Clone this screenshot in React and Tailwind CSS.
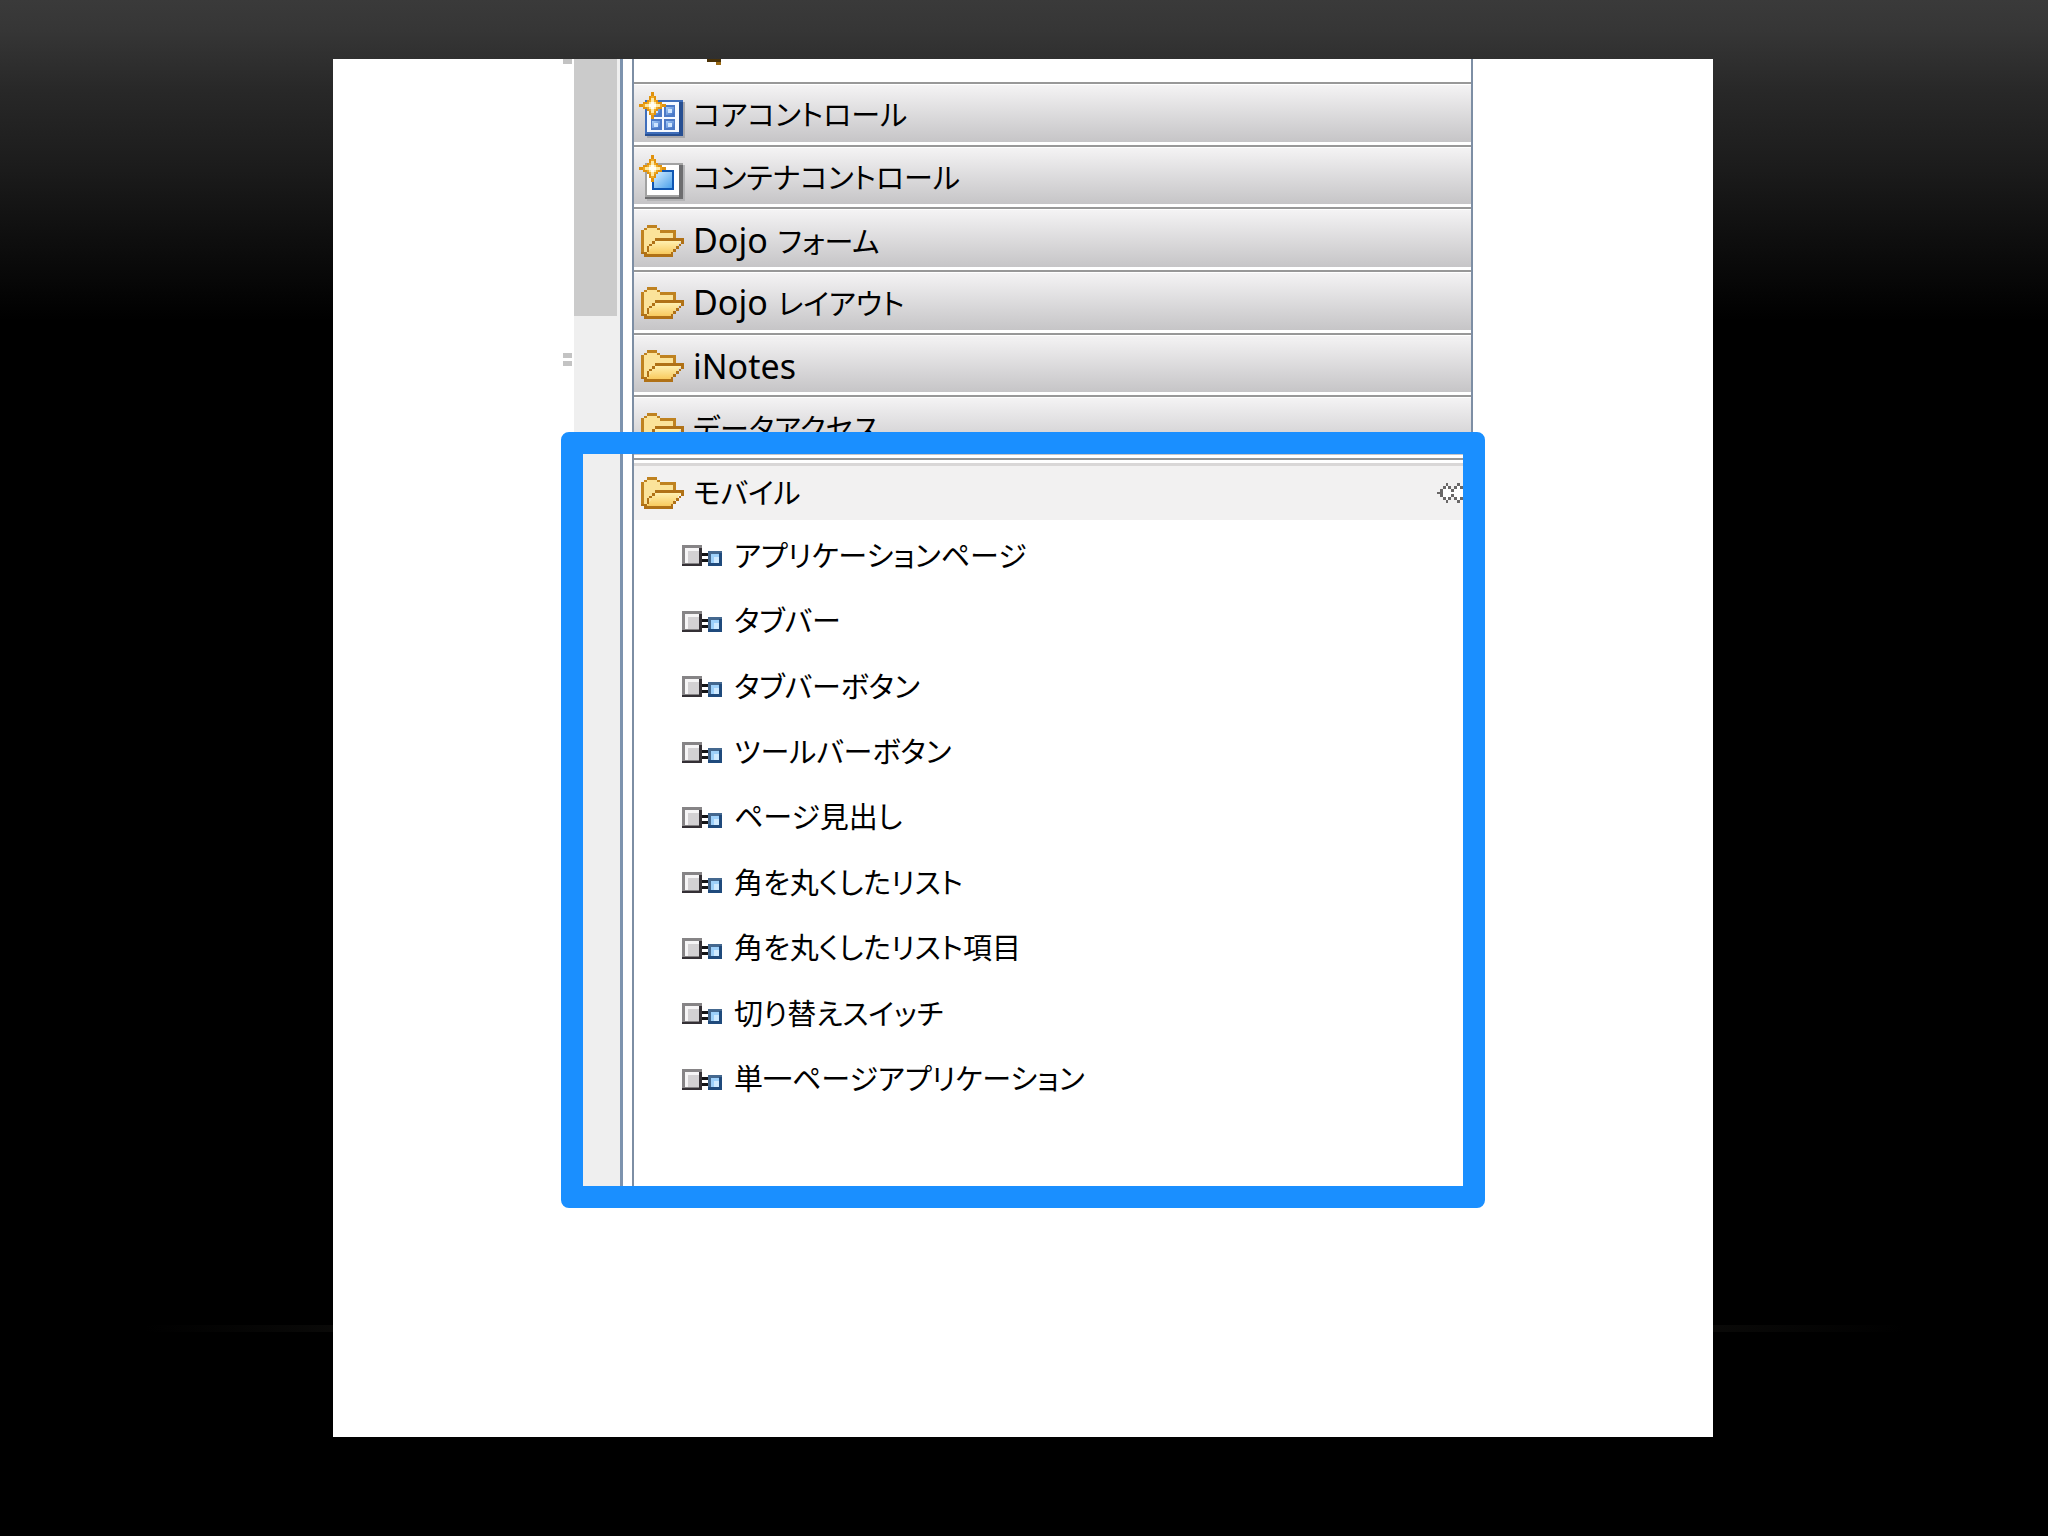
function Sparkle() {
  return (
    <g>
      <path d="M6 0h2v2h1v2h1v1h2v1h2v2h-2v1h-2v1h-1v2h-1v2h-2v-2h-1v-2h-1v-1h-2v-1h-2v-2h2v-1h2v-1h1v-2h1z" fill="#e0920e" />
      <path d="M6 2h2v2h1v1h1v1h2v2h-2v1h-1v1h-1v2h-2v-2h-1v-1h-1v-1h-2v-2h2v-1h1v-1h1z" fill="#f0a923" />
      <path d="M6 3h2v2h1v1h2v2h-2v1h-1v2h-2v-2h-1v-1h-2v-2h2v-1h1z" fill="#fde9a6" />
      <path d="M6 5h2v1h1v2h-1v1h-2v-1h-1v-2h1z" fill="#fffdf2" />
    </g>
  );
}

function CoreIcon() {
  return (
    <svg viewBox="0 0 24 24" className="h-[46px] w-[46px]" shapeRendering="crispEdges" aria-hidden="true">
      <defs>
        <linearGradient id="cell" x1="0" y1="0" x2="1" y2="1">
          <stop offset="0" stopColor="#a9d0fb" />
          <stop offset="1" stopColor="#3d6fc4" />
        </linearGradient>
      </defs>
      <path d="M4 5h20v19h-20z" fill="#a9a9ad" />
      <path d="M3 4h20v19h-20z" fill="#3f6ebb" />
      <path d="M21 5h2v18h-20v-1h18z" fill="#274f92" />
      <path d="M4 5h17v16h-17z" fill="#f5f9ff" />
      {[[6, 7], [13, 7], [6, 14], [13, 14]].map(([x, y]) => (
        <g key={x + "-" + y}>
          <rect x={x} y={y} width="6" height="6" fill="#4b79c6" />
          <rect x={x + 1} y={y + 1} width="4" height="4" fill="url(#cell)" />
          <rect x={x + 2} y={y + 2} width="2" height="2" fill="#cfe6ff" />
        </g>
      ))}
      <Sparkle />
    </svg>
  );
}

function ContainerIcon() {
  return (
    <svg viewBox="0 0 24 24" className="h-[46px] w-[46px]" shapeRendering="crispEdges" aria-hidden="true">
      <defs>
        <linearGradient id="pane" x1="0" y1="0" x2="1" y2="1">
          <stop offset="0" stopColor="#d2ecff" />
          <stop offset="1" stopColor="#4fa3ec" />
        </linearGradient>
      </defs>
      <path d="M4 5h20v19h-20z" fill="#b4b4b6" />
      <path d="M3 4h20v19h-20z" fill="#a2a2a2" />
      <path d="M21 5h2v18h-20v-1h18z" fill="#6d6d6f" />
      <path d="M4 5h17v16h-17z" fill="#ffffff" />
      <rect x="7" y="8" width="11" height="10" fill="#0f56b3" />
      <rect x="8" y="9" width="9" height="8" fill="url(#pane)" />
      <Sparkle />
    </svg>
  );
}

function FolderIcon() {
  return (
    <svg viewBox="0 0 16 12" className="ml-0.5 h-8 w-[43px]" shapeRendering="crispEdges" aria-hidden="true">
      <defs>
        <linearGradient id="flap" x1="0" y1="0" x2="0" y2="1">
          <stop offset="0" stopColor="#fff0b0" />
          <stop offset="1" stopColor="#f8c95c" />
        </linearGradient>
      </defs>
      <path d="M1 2h1v-1h4v1h6v4h3l-4 5h-10z" fill="#fbe39a" />
      <path d="M2 11L5.500 6H15L11 11z" fill="url(#flap)" />
      <path d="M0 2h1v8h-1zM1 1h1v1h-1zM2 0h4v1h-4zM6 1h1v1h-1zM7 2h6v1h-6zM12 3h1v2h-1z" fill="#bf8220" />
      <path d="M5 5h11v1h-11zM15 6h1v1h-1zM14 7h1v1h-1zM13 8h1v1h-1zM12 9h1v1h-1zM11 10h1v1h-1zM1 11h11v1h-11zM0 10h1v1h-1zM4 6h1v1h-1zM3 7h1v1h-1zM2 8h1v2h-1zM1 10h1v1h-1z" fill="#b07116" />
    </svg>
  );
}

function PlugIcon() {
  return (
    <svg viewBox="0 0 40 21" className="h-[21px] w-10 shrink-0" shapeRendering="crispEdges" aria-hidden="true">
      <rect width="20" height="21" fill="#868486" />
      <path d="M17 3h3v18h-20v-2h17z" fill="#343035" />
      <rect x="3" y="3" width="14" height="15" fill="#f6f5f6" />
      <rect x="6" y="6" width="11" height="12" fill="#d3d1d3" />
      <path d="M20 8h6v3h-6zM20 14h6v3h-6z" fill="#141417" />
      <rect x="26" y="6" width="14" height="15" fill="#44688f" />
      <path d="M37 8h3v13h-14v-3h11z" fill="#1f4a7c" />
      <rect x="29" y="9" width="8" height="9" fill="#9dd0fa" />
      <rect x="32" y="12" width="5" height="6" fill="#cfeaff" />
    </svg>
  );
}

function PinIcon() {
  return (
    <svg viewBox="0 0 12 7" className="h-5 w-[34px]" shapeRendering="crispEdges" aria-hidden="true">
      <path d="M1 3h1v-1h1v-1h1v1h1v1h1v-1h1v-1h1v1h1v1h2v1h-2v1h-1v1h-1v-1h-1v-1h-1v1h-1v1h-1v-1h-1v-1h-1z" fill="#fff" />
      <path d="M0 3h1v1h-1zM1 2h1v3h-1zM2 1h1v1h-1zM2 5h1v1h-1zM3 0h1v1h-1zM3 6h1v1h-1zM4 1h1v1h-1zM4 5h1v1h-1zM5 2h1v1h-1zM5 4h1v1h-1zM6 1h1v1h-1zM6 5h1v1h-1zM7 0h1v1h-1zM7 6h1v1h-1zM8 1h1v1h-1zM8 5h1v1h-1zM9 2h1v3h-1zM10 3h1v1h-1z" fill="#6a6868" />
    </svg>
  );
}

const drawers = [
  { icon: CoreIcon, label: "コアコントロール" },
  { icon: ContainerIcon, label: "コンテナコントロール" },
  { icon: FolderIcon, latin: "Dojo", label: "フォーム" },
  { icon: FolderIcon, latin: "Dojo", label: "レイアウト" },
  { icon: FolderIcon, latin: "iNotes", label: "" },
  { icon: FolderIcon, label: "データアクセス" },
];

const items = [
  "アプリケーションページ",
  "タブバー",
  "タブバーボタン",
  "ツールバーボタン",
  "ページ見出し",
  "角を丸くしたリスト",
  "角を丸くしたリスト項目",
  "切り替えスイッチ",
  "単一ページアプリケーション",
];

function Drawer({ icon: Icon, latin, label }) {
  return (
    <button type="button" className="flex min-h-0 w-full flex-1 flex-col border-t-2 border-[#989898] bg-white pt-px pb-[3px] text-left">
      <span className="flex w-full flex-1 items-center bg-linear-to-b from-[#f4f3f4] to-[#c6c5c7] pt-1 pl-[5px]">
        <span className="flex w-[54px] items-center">
          <Icon />
        </span>
        <span className="flex items-baseline gap-2.5 leading-10">
          {latin && <span className="text-[34px]">{latin}</span>}
          {label && <span>{label}</span>}
        </span>
      </span>
    </button>
  );
}

export default function App() {
  return (
    <main
      lang="ja"
      className={'relative flex min-h-screen bg-black bg-[linear-gradient(#3a3a3a_0px,#363636_30px,#282828_90px,#1c1c1c_165px,#0e0e0e_240px,#000_320px)] pt-[59px] pr-[335px] pb-[99px] pl-[333px] font-["Noto_Sans","Noto_Sans_CJK_JP",sans-serif] text-[29px] text-black [font-feature-settings:"palt"]'}
    >
      <div className="absolute inset-x-36 top-[1325px] h-[7px] bg-linear-to-r from-transparent via-[#2e2c26] to-transparent" />
      <section className="relative flex-1 bg-white pl-[228px]">
        <div className="relative mr-[228px] flex h-[1149px] pr-3 pb-[22px]">
          <div className="w-[13px] pl-0.5">
            <div className="h-[5px] w-[9px] bg-[#c3c3c3]" />
            <div className="mt-[289px] h-[5px] w-[9px] bg-[#c3c3c3]" />
            <div className="mt-[3px] h-[5px] w-[9px] bg-[#c3c3c3]" />
          </div>
          <div className="w-[46px] bg-[#efefef] pr-[3px]">
            <div className="h-[257px] bg-[#cbcbcb]" />
          </div>
          <div className="w-[3px] bg-[#7d93ae]" />
          <div className="w-[9px]" />
          <div className="flex flex-1 flex-col border-x-2 border-x-[#7d8ea4] bg-white">
            <div className="h-[23px] pl-[73px]">
              <svg viewBox="0 0 14 6" className="h-1.5 w-3.5" aria-hidden="true">
                <path d="M0 0h14v6h-5v-3h-9z" fill="#4a3208" />
                <path d="M9 3h5v3h-5z" fill="#9a6a16" />
              </svg>
            </div>
            <nav className="flex h-[376px] flex-col">
              {drawers.map((d, i) => (
                <Drawer key={i} {...d} />
              ))}
            </nav>
            <button type="button" className="flex w-full flex-col border-t-2 border-[#989898] bg-white pt-[3px] text-left">
              <span className="flex h-[57px] w-full items-center border-t-[3px] border-[#d9d7d7] bg-[#f2f1f1] pl-[5px]">
                <span className="w-[54px]">
                  <FolderIcon />
                </span>
                <span className="flex-1 leading-10">モバイル</span>
                <PinIcon />
              </span>
            </button>
            <ul className="mt-[3px] flex h-[589px] flex-col pl-12">
              {items.map((t) => (
                <li key={t} className="flex flex-1">
                  <button type="button" className="flex flex-1 items-center gap-3 text-left leading-10">
                    <PlugIcon />
                    {t}
                  </button>
                </li>
              ))}
            </ul>
          </div>
          <div className="pointer-events-none absolute inset-x-0 top-[373px] bottom-0 rounded-lg border-[22px] border-[#1a8fff]" />
        </div>
      </section>
    </main>
  );
}
